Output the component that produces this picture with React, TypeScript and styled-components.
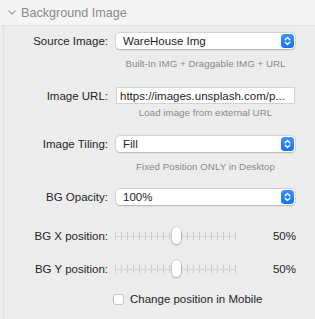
import styled, { createGlobalStyle } from "styled-components";

const GlobalStyle = createGlobalStyle`
	html, body {
		margin: 0;
		padding: 0;
		background: #ececec;
	}
	body {
		font-family: "Liberation Sans", Arial, sans-serif;
		-webkit-font-smoothing: antialiased;
	}
`;

const Page = styled.div`
	width: 315px;
	height: 319px;
	overflow: hidden;
	background: #ececec;
`;

const Header = styled.div`
	height: 26px;
	display: flex;
	align-items: center;
	gap: 5px;
	padding-left: 8px;
	background: #f5f5f5;
	color: #8a8a8a;
	font-size: 12.6px;
	border-bottom: 1px solid #e2e2e2;
	box-sizing: border-box;
`;

const Panel = styled.div`
	padding-top: 7px;
	height: 293px;
	box-sizing: border-box;
	border-left: 1px solid #dedede;
	margin-left: 3px;
`;

const Row = styled.div<{ $top?: number }>`
	display: grid;
	grid-template-columns: 104px 179px;
	column-gap: 8px;
	align-items: center;
	margin-top: ${({ $top }) => $top ?? 0}px;
	height: 16px;
`;

const Label = styled.div`
	text-align: right;
	font-size: 11.5px;
	color: #262626;
	white-space: nowrap;
`;

const Hint = styled.div<{ $top?: number }>`
	margin-top: ${({ $top }) => $top ?? 0}px;
	margin-left: 112px;
	width: 179px;
	text-align: center;
	font-size: 9.7px;
	line-height: 12px;
	color: #8a8a8a;
	letter-spacing: 0.05px;
	white-space: nowrap;
`;

const Select = styled.div`
	height: 16px;
	background: #fff;
	border-radius: 4px;
	box-shadow: 0 0 0 0.5px rgba(0, 0, 0, 0.14), 0 0.5px 1.5px rgba(0, 0, 0, 0.18);
	display: flex;
	align-items: center;
	justify-content: space-between;
	padding: 0 1px 0 7px;
	font-size: 11.5px;
	color: #1e1e1e;
`;

const Stepper = styled.div`
	width: 13px;
	height: 14px;
	border-radius: 3.5px;
	background: linear-gradient(#3d93fa, #1572f1);
	display: flex;
	align-items: center;
	justify-content: center;
`;

const TextInput = styled.div`
	height: 17px;
	background: #fff;
	border: 1px solid #d2d2d2;
	box-sizing: border-box;
	display: flex;
	align-items: center;
	padding-left: 3px;
	font-size: 11.5px;
	color: #1e1e1e;
	white-space: nowrap;
	overflow: hidden;
`;

const SliderCell = styled.div`
	display: flex;
	align-items: center;
	justify-content: space-between;
`;

const Track = styled.div`
	position: relative;
	width: 121px;
	height: 16px;
	margin-left: -1px;
	background:
		linear-gradient(#d6d6d6, #d6d6d6) center / 100% 1px no-repeat,
		repeating-linear-gradient(
			90deg,
			#cbcbcb 0,
			#cbcbcb 1px,
			transparent 1px,
			transparent 6px
		)
		center / 100% 8px no-repeat;
`;

const Thumb = styled.div`
	position: absolute;
	top: -1px;
	width: 9px;
	height: 17px;
	margin-left: -4px;
	border-radius: 5px;
	background: #fff;
	box-shadow: 0 0 0 0.5px rgba(0, 0, 0, 0.18), 0 1px 2px rgba(0, 0, 0, 0.22);
`;

const Value = styled.div`
	font-size: 11.5px;
	color: #262626;
	margin-right: -1px;
`;

const CheckRow = styled.label`
	display: flex;
	align-items: center;
	gap: 6px;
	margin-top: 14px;
	margin-left: 109px;
	height: 16px;
	font-size: 11.5px;
	color: #262626;
`;

const Box = styled.span`
	width: 11px;
	height: 11px;
	border-radius: 3px;
	background: #fff;
	box-shadow: inset 0 0 0 1px #c4c4c4;
`;

function Chevron() {
	return (
		<svg width="8" height="5" viewBox="0 0 8 5">
			<polyline
				points="0.8,0.8 4,4 7.2,0.8"
				fill="none"
				stroke="#9a9a9a"
				strokeWidth="1.1"
				strokeLinecap="round"
				strokeLinejoin="round"
			/>
		</svg>
	);
}

function StepperIcon() {
	return (
		<Stepper>
			<svg width="7" height="10" viewBox="0 0 7 10">
				<polyline points="1.2,3.8 3.5,1.5 5.8,3.8" fill="none" stroke="#fff" strokeWidth="1.3" strokeLinecap="round" strokeLinejoin="round" />
				<polyline points="1.2,6.2 3.5,8.5 5.8,6.2" fill="none" stroke="#fff" strokeWidth="1.3" strokeLinecap="round" strokeLinejoin="round" />
			</svg>
		</Stepper>
	);
}

function SliderField({ label, value, top }: { label: string; value: number; top: number }) {
	return (
		<Row $top={top}>
			<Label>{label}</Label>
			<SliderCell>
				<Track>
					<Thumb style={{ left: `${value}%` }} />
				</Track>
				<Value>{value}%</Value>
			</SliderCell>
		</Row>
	);
}

export default function App() {
	return (
		<Page>
			<GlobalStyle />
			<Header>
				<Chevron />
				<span>Background Image</span>
			</Header>
			<Panel>
				<Row>
					<Label>Source Image:</Label>
					<Select>
						WareHouse Img
						<StepperIcon />
					</Select>
				</Row>
				<Hint $top={9}>Built-In IMG + Draggable IMG + URL</Hint>

				<Row $top={17}>
					<Label>Image URL:</Label>
					<TextInput>https://images.unsplash.com/p...</TextInput>
				</Row>
				<Hint $top={4}>Load image from external URL</Hint>

				<Row $top={17}>
					<Label>Image Tiling:</Label>
					<Select>
						Fill
						<StepperIcon />
					</Select>
				</Row>
				<Hint $top={9}>Fixed Position ONLY in Desktop</Hint>

				<Row $top={16}>
					<Label>BG Opacity:</Label>
					<Select>
						100%
						<StepperIcon />
					</Select>
				</Row>

				<SliderField label="BG X position:" value={50} top={23} />
				<SliderField label="BG Y position:" value={50} top={17} />

				<CheckRow>
					<Box />
					Change position in Mobile
				</CheckRow>
			</Panel>
		</Page>
	);
}
